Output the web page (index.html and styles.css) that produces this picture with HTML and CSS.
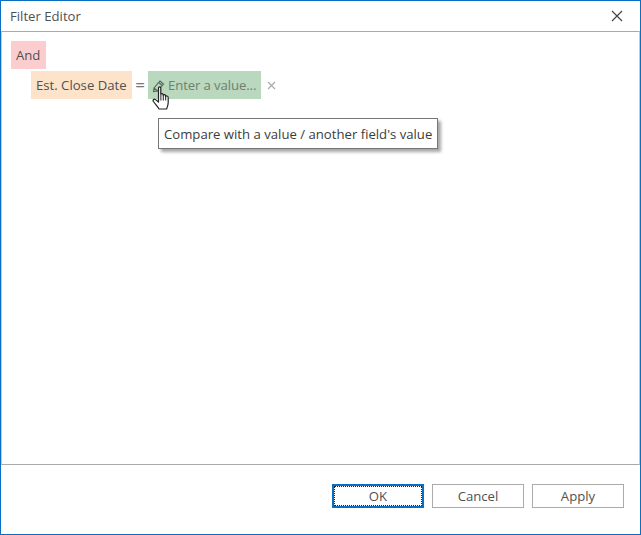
FILE: index.html
```html
<!DOCTYPE html>
<html lang="en">
<head>
<meta charset="utf-8">
<title>Filter Editor</title>
<link rel="stylesheet" href="styles.css">
</head>
<body>
<div class="dialog">
  <header class="titlebar">
    <span class="title">Filter Editor</span>
    <svg class="close" width="12" height="12" viewBox="0 0 12 12"><path d="M1 1L11 11M11 1L1 11" stroke="#444" stroke-width="1.2" fill="none"/></svg>
  </header>
  <main class="editor">
    <div class="row"><span class="chip group">And</span></div>
    <div class="row condition">
      <span class="chip field">Est. Close Date</span>
      <span class="op">=</span>
      <span class="chip value">
        <svg class="pencil" width="13" height="15" viewBox="0 0 13 15"><path d="M1.5 13.5L2 10L8 3L11.5 6L5.5 13ZM2 10L5.5 13M6.8 4.5L10.2 7.5" stroke="#566558" stroke-width="1.1" fill="none"/></svg>
        <span class="placeholder">Enter a value...</span>
      </span>
      <svg class="remove" width="9" height="9" viewBox="0 0 9 9"><path d="M1 1L8 8M8 1L1 8" stroke="#a9a9a9" stroke-width="1.2" fill="none"/></svg>
    </div>
    <svg class="hand" width="19" height="24" viewBox="0 0 19 24"><path d="M6.5 2C6.5 0.6 8.8 0.6 8.8 2V8.5C9 7.2 11 7.3 11.2 8.6V9.5C11.4 8.3 13.4 8.4 13.6 9.8V10.6C13.9 9.6 16.2 9.8 16.2 11.4V16.5C16.2 19 15.4 20.5 14.6 23H7C5.6 20.6 3.6 18.6 1.4 15.5C0.3 13.8 2.2 12.4 3.6 13.6L6.5 16Z" fill="#fff" stroke="#222" stroke-width="1.2" stroke-linejoin="round"/><path d="M8.9 9V14.5M11.3 9.5V14.5M13.7 10.5V14.5" stroke="#222" stroke-width="1" fill="none"/></svg>
    <div class="tooltip">Compare with a value / another field's value</div>
  </main>
  <footer class="footer">
    <button class="btn default" type="button"><span class="focus">OK</span></button>
    <button class="btn" type="button">Cancel</button>
    <button class="btn" type="button">Apply</button>
  </footer>
</div>
</body>
</html>
```
FILE: styles.css
```css
* { box-sizing: border-box; }
html, body { margin: 0; padding: 0; background: #fff; }
body { width: 641px; height: 535px; overflow: hidden; }
.dialog {
  width: 641px; height: 535px;
  border: 1px solid #0a6fc2;
  display: flex; flex-direction: column;
  font: 13.15px/18px "Open Sans", "Noto Sans", sans-serif;
  color: #505050;
  background: #fff;
}
.titlebar {
  height: 30px; flex: none;
  display: flex; align-items: center; justify-content: space-between;
  padding: 0 17px 0 9px;
}
.editor {
  position: relative;
  height: 434px; flex: none;
  border-top: 1px solid #a9a9a9;
  border-bottom: 1px solid #a9a9a9;
  border-left: 1px solid #c8c8c8;
  border-right: 1px solid #c8c8c8;
  padding: 9px 9px;
  display: flex; flex-direction: column; gap: 2px;
}
.row { display: flex; align-items: center; height: 28px; }
.condition { padding-left: 20px; }
.chip { height: 28px; display: inline-flex; align-items: center; padding: 0 5px; }
.group { background: #fbcdcf; width: 35px; }
.field { background: #fde3ca; width: 101px; white-space: nowrap; }
.op { width: 16px; text-align: center; color: #777; font-size: 17px; }
.value { background: #b9d8bd; width: 113px; padding-left: 4px; gap: 3px; white-space: nowrap; }
.placeholder { color: #6f7f72; letter-spacing: -0.1px; }
.pencil { flex: none; }
.remove { margin-left: 6px; }
.hand { position: absolute; left: 150px; top: 54px; }
.tooltip {
  position: absolute; left: 156px; top: 86px;
  width: 280px; height: 31px;
  background: #fff;
  border: 1px solid #767676;
  box-shadow: 3px 3px 3px rgba(0,0,0,.35);
  padding: 6px 5px 0;
  color: #3c3c3c;
  white-space: nowrap;
}
.footer {
  flex: 1;
  display: flex; justify-content: flex-end; align-items: flex-start; gap: 8px;
  padding: 19px 16px 0 0;
}
.btn {
  width: 92px; height: 24px;
  background: #fff; border: 1px solid #ababab;
  font: 13.15px/18px "Open Sans", "Noto Sans", sans-serif; color: #505050;
  padding: 0;
}
.default { border: 2px solid #0a6fc2; }
.focus {
  display: flex; align-items: center; justify-content: center;
  width: 100%; height: 100%;
  border: 1px dotted #222;
}
```
